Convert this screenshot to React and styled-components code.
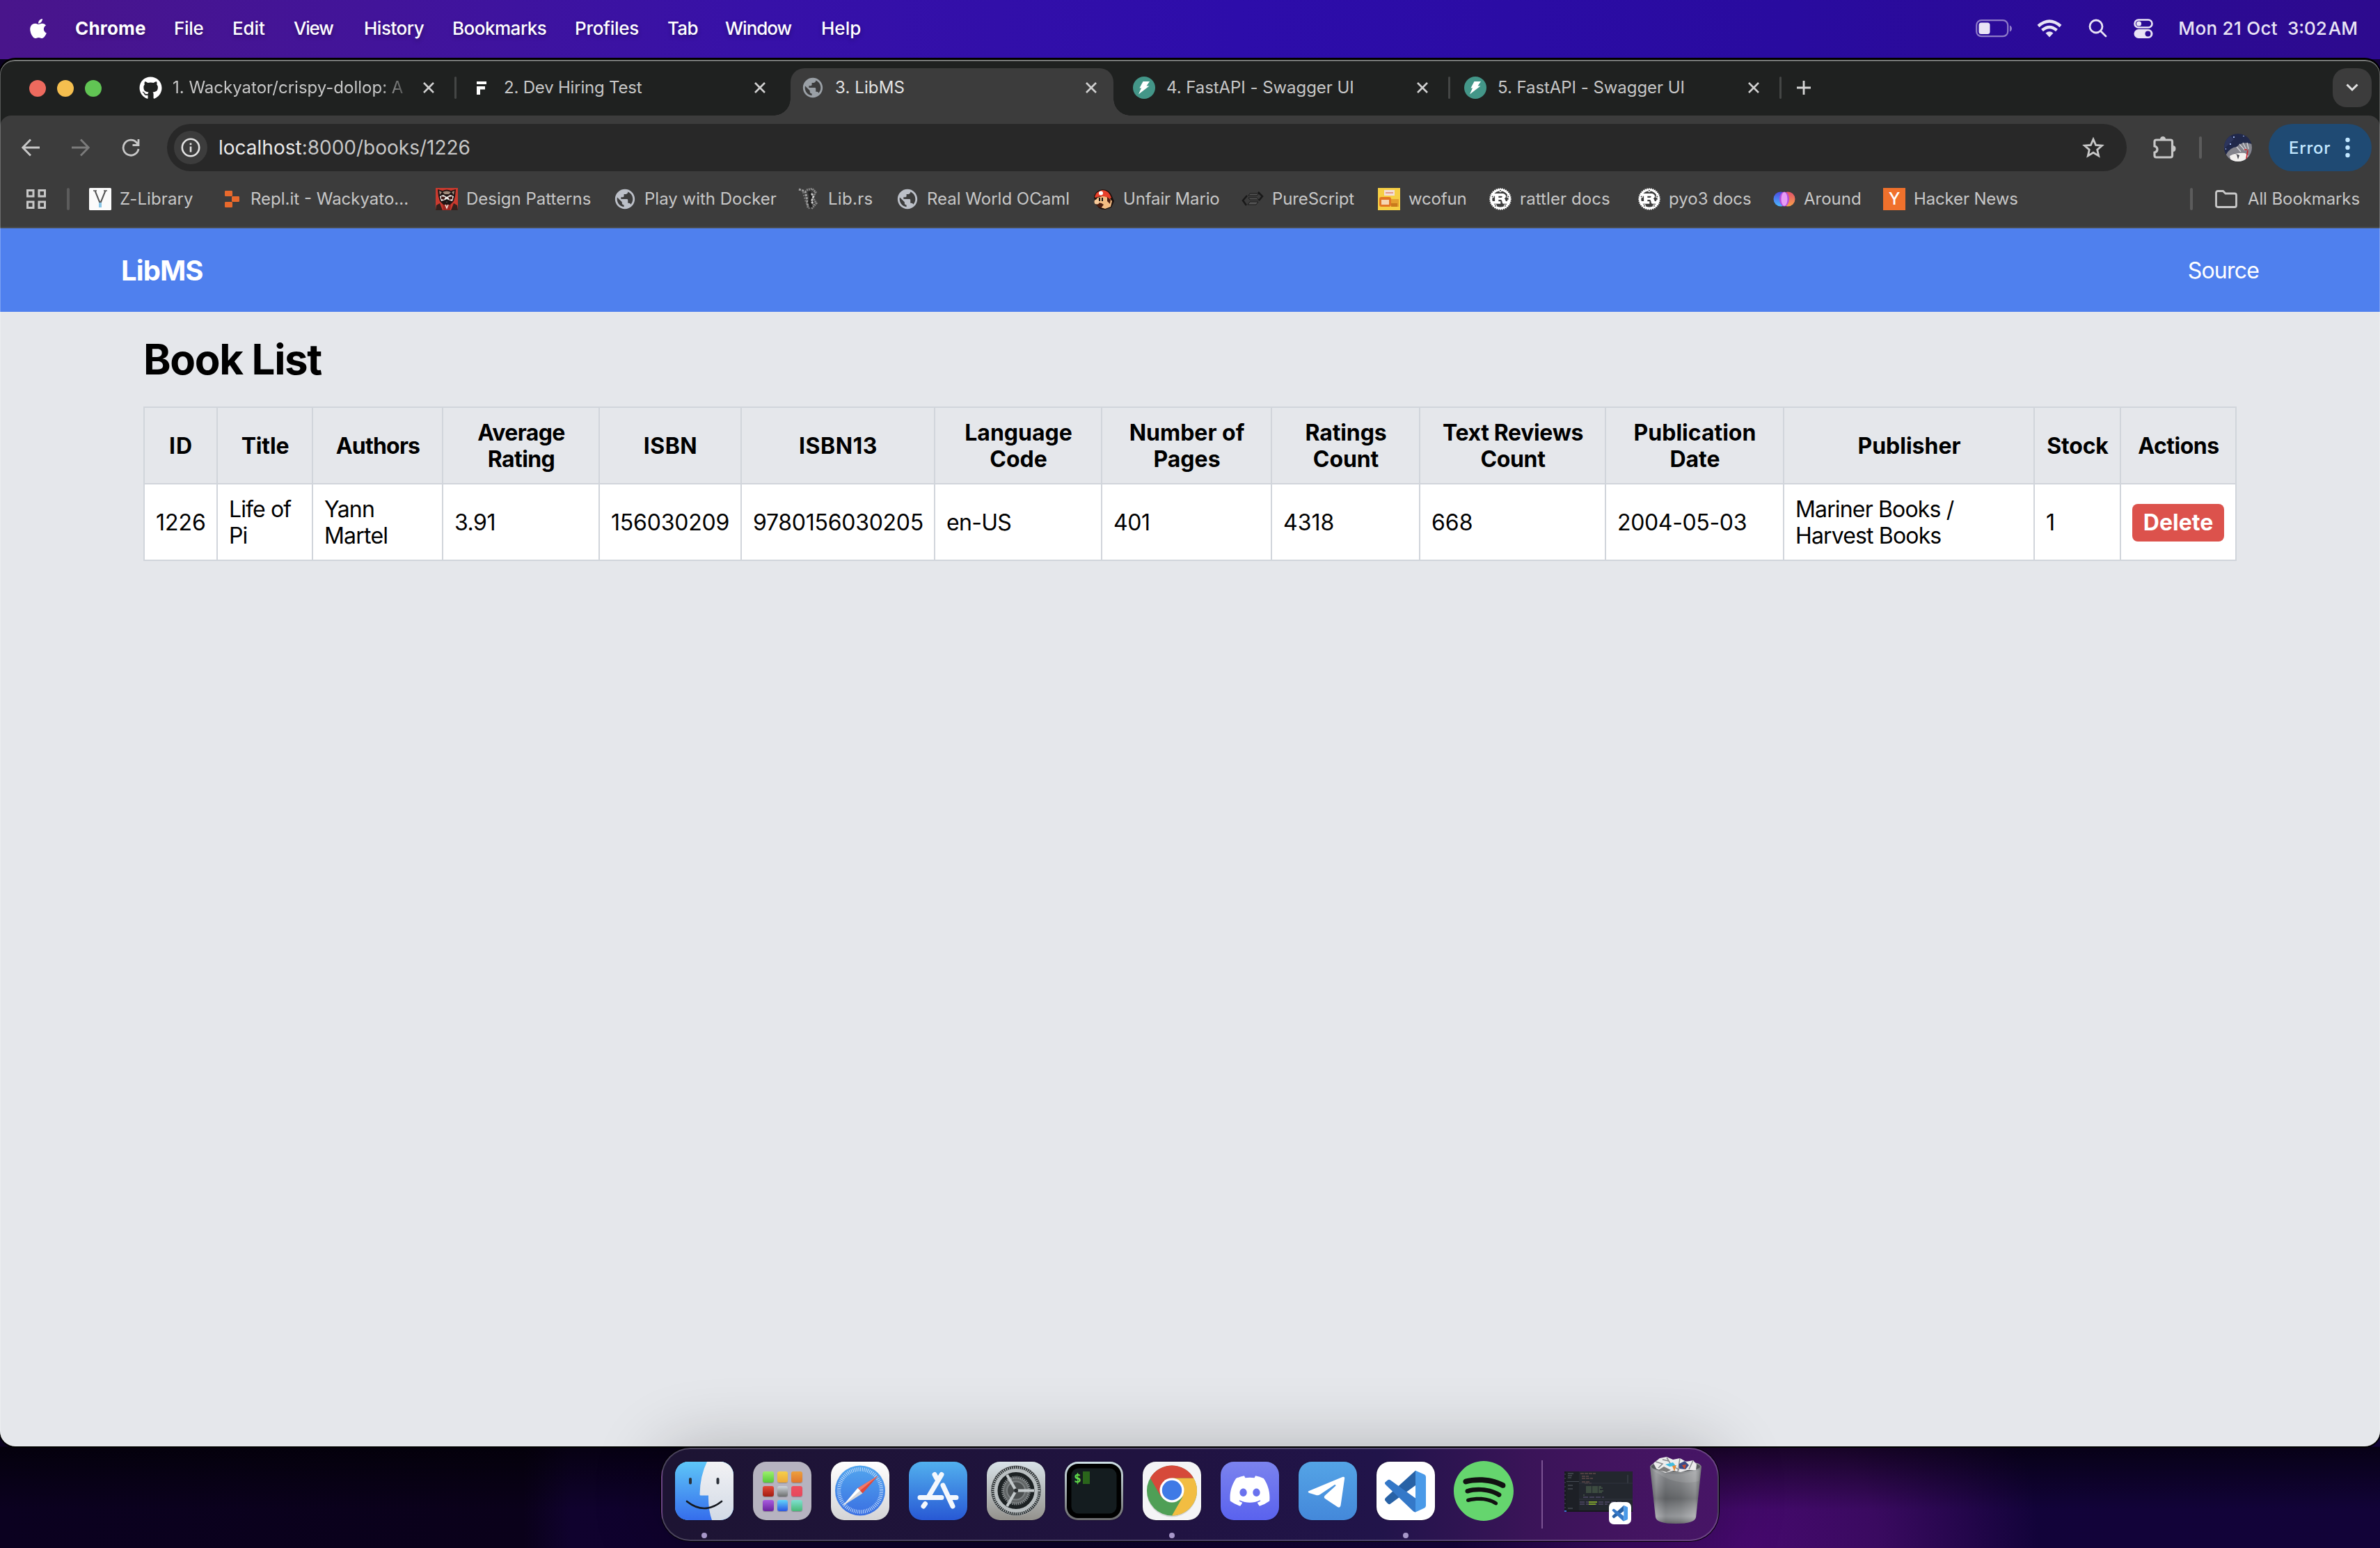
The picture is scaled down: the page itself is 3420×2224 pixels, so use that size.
import React from "react";
import styled, { createGlobalStyle, css } from "styled-components";
import { FaApple, FaDiscord, FaGithub } from "react-icons/fa";
import { MdPublic } from "react-icons/md";
import { SiRust, SiSpotify } from "react-icons/si";

const Global = createGlobalStyle`
  * { box-sizing: border-box; }
  body {
    margin: 0;
    font-family: Inter, "Noto Sans", sans-serif;
    overflow: hidden;
  }
  svg { display: block; flex: none; }
`;

/* ---------- Desktop ---------- */

const Desktop = styled.div`
  position: relative;
  width: 3420px;
  height: 2224px;
  display: flex;
  flex-direction: column;
  overflow: hidden;
  background:
    linear-gradient(180deg, transparent 2078px, rgba(0, 0, 0, 0.6) 2079px, transparent 2170px),
    radial-gradient(ellipse 420px 420px at 2510px 2224px, #46096e 0%, #3a0a60 45%, transparent 100%),
    linear-gradient(90deg, #0b0120 0%, #0a011a 22%, #10022e 24%, #0c0228 45%, #15043a 60%, #12033a 80%, #120338 100%);
`;

const MenuBar = styled.header`
  height: 85px;
  flex: none;
  display: flex;
  align-items: center;
  justify-content: space-between;
  padding: 0 32px 4px 39px;
  color: #fff;
  background: linear-gradient(90deg, #49158b 0%, #42149a 16%, #3711a8 32%, #2d0daa 52%, #290b9f 75%, #2d0a8e 100%);
`;

const Menus = styled.nav`
  display: flex;
  align-items: center;
  text-shadow: 0 3px 6px rgba(0, 0, 0, 0.3);
`;

const AppleSlot = styled.span`
  width: 69px;
  display: flex;
`;

const MenuItem = styled.span`
  width: ${(p) => p.$w}px;
  font-size: 26px;
  line-height: 36px;
  white-space: nowrap;
  font-weight: ${(p) => (p.$strong ? 700 : 500)};
  letter-spacing: ${(p) => p.$track || 0}px;
`;

const StatusArea = styled.div`
  display: flex;
  align-items: center;
  color: #e9e4f5;
`;

const StatusIcon = styled.span`
  width: ${(p) => p.$w}px;
  display: flex;
`;

const Clock = styled.span`
  font-size: 26px;
  font-weight: 500;
  letter-spacing: ${(p) => p.$track}px;
  word-spacing: ${(p) => p.$word || 0}px;
  margin-right: ${(p) => p.$gap || 0}px;
  white-space: nowrap;
`;

/* ---------- Browser window ---------- */

const BrowserWindow = styled.main`
  position: relative;
  height: 1993px;
  flex: none;
  display: flex;
  flex-direction: column;
  border-radius: 22px;
  overflow: hidden;
  border-top: 1px solid #000;
  background: #3c3c3c;
  box-shadow: 0 0 0 2px #000;
  &::after {
    content: "";
    position: absolute;
    inset: 0;
    border-radius: 21px;
    pointer-events: none;
    box-shadow: inset 0 0 0 1px rgba(255, 255, 255, 0.25), inset 0 2px 0 rgba(255, 255, 255, 0.3);
  }
`;

const TabStrip = styled.div`
  height: 80px;
  flex: none;
  display: flex;
  align-items: flex-start;
  padding: 12px 12px 0 42px;
  background: #1f2120;
`;

const Lights = styled.div`
  height: 56px;
  width: 142px;
  display: flex;
  align-items: center;
  gap: 16px;
  padding-top: 2px;
`;

const Light = styled.span`
  width: 24px;
  height: 24px;
  border-radius: 50%;
  background: ${(p) => p.$color};
`;

const TabBox = styled.div`
  position: relative;
  width: 464px;
  height: 68px;
  flex: none;
  display: flex;
  align-items: center;
  padding: 0 16px 12px;
  gap: 16px;
  color: ${(p) => (p.$active ? "#e3e3e3" : "#c7c7c7")};
  ${(p) =>
    p.$active &&
    css`
      background: #3c3c3c;
      border-radius: 20px 20px 0 0;
      &::before,
      &::after {
        content: "";
        position: absolute;
        bottom: 0;
        width: 24px;
        height: 24px;
      }
      &::before {
        left: -24px;
        background: radial-gradient(circle at 0 0, transparent 23.5px, #3c3c3c 24px);
      }
      &::after {
        right: -24px;
        background: radial-gradient(circle at 100% 0, transparent 23.5px, #3c3c3c 24px);
      }
    `}
`;

const TabTitle = styled.span`
  flex: 1;
  font-size: 24px;
  line-height: 34px;
  white-space: nowrap;
  overflow: hidden;
  letter-spacing: ${(p) => p.$track || 0}px;
  ${(p) =>
    p.$fade &&
    css`
      mask-image: linear-gradient(90deg, #000 88%, transparent 104%);
    `}
`;

const IconBox = styled.span`
  width: ${(p) => p.$w || 32}px;
  height: ${(p) => p.$h || p.$w || 32}px;
  flex: none;
  display: flex;
  align-items: center;
  justify-content: center;
`;

const TabGap = styled.span`
  width: 12px;
  height: 56px;
  flex: none;
  display: flex;
  align-items: center;
  justify-content: center;
`;

const Divider = styled.span`
  width: ${(p) => p.$w || 4}px;
  height: 32px;
  flex: none;
  border-radius: 2px;
  background: ${(p) => p.$color || "#5c5c5c"};
`;

const NewTab = styled.button`
  width: 56px;
  height: 56px;
  padding: 0;
  border: 0;
  background: none;
  display: flex;
  align-items: center;
  justify-content: center;
`;

const TabSearch = styled.button`
  width: 56px;
  height: 56px;
  margin-left: auto;
  padding: 0;
  border: 0;
  border-radius: 20px;
  background: #3c3c3c;
  display: flex;
  align-items: center;
  justify-content: center;
`;

const ToolbarWrap = styled.div`
  background: #1f2120;
  flex: none;
`;

const Toolbar = styled.div`
  height: 92px;
  display: flex;
  align-items: center;
  padding: 0 12px 0 8px;
  background: #3c3c3c;
  border-radius: 16px 16px 0 0;
`;

const NavButton = styled.span`
  width: 72px;
  height: 68px;
  flex: none;
  display: flex;
  align-items: center;
  justify-content: center;
`;

const Omnibox = styled.div`
  width: 2816px;
  height: 68px;
  flex: none;
  margin-left: 16px;
  border-radius: 34px;
  background: #282828;
  display: flex;
  align-items: center;
  padding: 0 32px 0 10px;
`;

const SiteInfo = styled.span`
  width: 48px;
  height: 48px;
  border-radius: 50%;
  background: #3c3c3c;
  display: flex;
  align-items: center;
  justify-content: center;
`;

const Url = styled.span`
  flex: 1;
  margin-left: 16px;
  font-size: 28px;
  color: #c7c7c7;
  b {
    font-weight: 400;
    color: #e9e9e9;
  }
`;

const ToolbarEnd = styled.div`
  flex: 1;
  display: flex;
  align-items: center;
  padding-left: 38px;
`;

const Avatar = styled.span`
  width: 40px;
  height: 40px;
  flex: none;
  border-radius: 50%;
  overflow: hidden;
`;

const ErrorPill = styled.button`
  width: 148px;
  height: 68px;
  flex: none;
  margin-left: auto;
  border: 0;
  border-radius: 34px;
  background: #1f4a73;
  color: #c2e7ff;
  font: 500 24px Inter, sans-serif;
  letter-spacing: 0.7px;
  display: flex;
  align-items: center;
  justify-content: space-between;
  padding: 0 31px 0 29px;
`;

const Bookmarks = styled.div`
  height: 70px;
  flex: none;
  display: flex;
  align-items: center;
  padding: 0 29px 12px 38px;
  border-bottom: 2px solid #4a4d50;
  background: #3c3c3c;
  font-size: 24px;
  color: #c7c7c7;
`;

const AppsSlot = styled.span`
  width: 58px;
  display: flex;
`;

const Bookmark = styled.span`
  width: ${(p) => (p.$w ? p.$w + "px" : "auto")};
  flex: none;
  display: flex;
  align-items: center;
  gap: 12px;
  line-height: 34px;
  letter-spacing: ${(p) => p.$track || 0}px;
  white-space: nowrap;
`;

const BookmarkList = styled.div`
  flex: 1;
  display: flex;
  padding-left: 28px;
`;

/* ---------- Page ---------- */

const Page = styled.div`
  flex: 1;
  background: #e5e7eb;
  color: #000;
`;

const SiteNav = styled.nav`
  height: 120px;
  padding: 0 174px;
  display: flex;
  align-items: center;
  justify-content: space-between;
  background: #4f80ee;
  color: #fff;
`;

const Brand = styled.a`
  font-size: 40px;
  font-weight: 700;
  letter-spacing: -0.9px;
`;

const SourceLink = styled.a`
  font-size: 32px;
  letter-spacing: -0.8px;
`;

const Container = styled.section`
  padding: 32px 206px;
`;

const Heading = styled.h1`
  margin: 0 0 32px;
  font-size: 60px;
  line-height: 72px;
  font-weight: 700;
  letter-spacing: -1.35px;
`;

const Table = styled.table`
  width: 3008px;
  table-layout: fixed;
  border-collapse: collapse;
  font-size: 32px;
  line-height: 38px;
`;

const cell = css`
  border: 2px solid #d1d5db;
  height: 110px;
  letter-spacing: ${(p) => p.$track || 0}px;
`;

const Th = styled.th`
  ${cell}
  padding: 2px 14px 0 15px;
  font-weight: 700;
  text-align: center;
  white-space: pre;
`;

const Td = styled.td`
  ${cell}
  padding: 2px 13px 0 16px;
  background: #fff;
  text-align: left;
  white-space: pre;
`;

const DeleteButton = styled.button`
  display: block;
  width: 132px;
  height: 54px;
  margin-bottom: 1px;
  padding: 0;
  border: 0;
  border-radius: 8px;
  background: #dc524c;
  color: #fff;
  font: 700 32px/54px Inter, sans-serif;
`;

/* ---------- Dock ---------- */

const Dock = styled.footer`
  position: absolute;
  left: 950px;
  top: 2080px;
  width: 1520px;
  height: 134px;
  padding: 0 18px;
  display: flex;
  align-items: flex-start;
  border: 2px solid rgba(255, 255, 255, 0.2);
  border-radius: 42px;
  background: linear-gradient(90deg, #1d1433 0%, #201340 45%, #21144a 68%, #3a1458 82%, #42145f 90%, #471566 100%);
  box-shadow: 0 0 0 1px #000, 0 0 100px rgba(0, 0, 0, 0.24);
`;

const DockItem = styled.span`
  width: ${(p) => p.$w || 112}px;
  padding-top: ${(p) => (p.$top === undefined ? 18 : p.$top)}px;
  flex: none;
`;

const RunningDot = styled.span`
  display: block;
  width: 8px;
  height: 8px;
  margin: 18px 0 0 38px;
  border-radius: 50%;
  background: #a797c9;
`;

const DockDivider = styled.span`
  width: 2px;
  height: 98px;
  margin: 16px 31px 0 0;
  background: #7b5393;
`;

const AppTile = styled.span`
  width: 84px;
  height: 84px;
  border-radius: 19px;
  overflow: hidden;
  display: flex;
  align-items: center;
  justify-content: center;
  background: ${(p) => p.$bg};
  box-shadow: 0 0 2px rgba(0, 0, 0, 0.6);
`;

const SpotifyDisc = styled.span`
  width: 86px;
  height: 86px;
  margin: -1px 0 0 -1px;
  border-radius: 50%;
  display: flex;
  align-items: center;
  justify-content: center;
  background: radial-gradient(circle, #111 0 40px, transparent 41px);
  color: #65d56e;
`;

/* ---------- Small icons ---------- */

const Close = () => (
  <IconBox>
    <svg width="16" height="16" viewBox="0 0 16 16" stroke="#d0d0d0" strokeWidth="2.6">
      <path d="M1 1 15 15M15 1 1 15" />
    </svg>
  </IconBox>
);

const Globe = ({ color }) => (
  <IconBox>
    <MdPublic size={34} color={color} />
  </IconBox>
);

const Github = () => (
  <IconBox>
    <FaGithub size={33} color="#fff" />
  </IconBox>
);

const FIcon = () => (
  <IconBox>
    <svg width="32" height="32" viewBox="0 0 32 32" fill="#fff">
      <path d="M9 7h14v4H9zM9 14h12v4.5h-7V26H9z" />
    </svg>
  </IconBox>
);

const FastApi = () => (
  <IconBox>
    <svg width="32" height="32" viewBox="0 0 32 32">
      <circle cx="16" cy="16" r="16" fill="#439688" />
      <path d="M14.500 7H24L19.500 13.500H23.500L8 25.500 12 16.500H9.500Z" fill="#fff" />
    </svg>
  </IconBox>
);

const Rust = () => (
  <IconBox>
    <SiRust size={32} color="#fff" />
  </IconBox>
);

const ZLib = () => (
  <svg width="32" height="32" viewBox="0 0 32 32">
    <rect width="32" height="32" rx="1.5" fill="#fbfbfb" />
    <path d="M8.5 4 15 20V26M23.500 4 17 20V26" stroke="#555" strokeWidth="2" fill="none" />
    <path d="M6 4h5M21 4h5" stroke="#555" strokeWidth="1.5" />
    <rect x="14" y="21" width="4" height="7" fill="#8ac6e6" />
  </svg>
);

const Replit = () => (
  <svg width="32" height="32" viewBox="0 0 32 32" fill="#e8692c">
    <rect x="7" y="4" width="11" height="8" rx="1.2" />
    <rect x="17" y="12" width="11" height="8" rx="1.2" />
    <rect x="7" y="20" width="11" height="8" rx="1.2" />
  </svg>
);

const Raccoon = () => (
  <svg width="32" height="32" viewBox="0 0 32 32">
    <rect width="32" height="32" fill="#c93a2e" />
    <path d="M3 2 10 4Q16 1 22 4L29 2 28 12 26 19 21 24H11L6 19 4 12Z" fill="#201414" />
    <path d="M5 4 9 6 6 10ZM27 4 23 6 26 10ZM10 6Q16 3 22 6L19 9H13Z" fill="#a08a7a" />
    <path d="M6 12 11 10 16 13 21 10 26 12 24 19 18 17 16 21 14 17 8 19Z" fill="#f3eeea" />
    <path d="M8 12 14 13 12 17 8 16ZM24 12 18 13 20 17 24 16Z" fill="#3a1512" />
    <circle cx="16" cy="18" r="2" fill="#111" />
    <path d="M1 25 6 22 10 32H0ZM31 25 26 22 22 32H32Z" fill="#33211d" />
    <path d="M10 24h12l-1 8H11Z" fill="#9c2621" />
    <path d="M14 24 16 29 18 24" stroke="#f4e5dc" fill="none" strokeWidth="1.500" />
  </svg>
);

const LibRs = () => (
  <svg width="32" height="32" viewBox="0 0 32 32" fill="none">
    <path d="M2 2 11 5 13 13 15 28" stroke="#a0a0a0" strokeWidth="3" strokeDasharray="3 1.500" />
    <path d="M13 3 21 1 26 6 22 14 27 22 20 30" stroke="#888" strokeWidth="3" strokeDasharray="2 1" />
    <path d="M17 5 19 13 17 21 20 28" stroke="#222" strokeWidth="4" />
    <path d="M20 8 23 12 20 19 23 24" stroke="#d2d2d2" strokeWidth="2.500" strokeDasharray="3 1.500" />
    <path d="M8 6 12 20 17 30" stroke="#777" strokeWidth="2.500" strokeDasharray="2 2" />
  </svg>
);

const Mario = () => (
  <svg width="32" height="32" viewBox="0 0 32 32">
    <path d="M2 14Q3 4 14 2 24 2 28 12L31 19 27 28 18 31Q9 31 7 26L2 21 3 17Z" fill="#1c0f0b" />
    <path d="M7 14 17 11 24 14 28 19 26 27 18 30 12 28 3 21 5 17Z" fill="#f4bd83" />
    <path d="M3 13Q5 5 14 3 23 3 27 14L24 16Q17 9 4 14Z" fill="#e8402a" />
    <circle cx="12" cy="7.500" r="3" fill="#fff" />
    <path d="M21 13 26 17 25 23 21 19ZM5 22Q12 20 16 24L12 29Q6 27 5 22Z" fill="#4a1d10" />
    <path d="M10 14v5M14 14v5" stroke="#111" strokeWidth="2" />
    <circle cx="6" cy="20" r="3.600" fill="#f8cb9a" />
  </svg>
);

const PureScript = () => (
  <svg width="32" height="32" viewBox="0 0 32 32" fill="none" stroke="#191919">
    <path d="M8 11 2 18 7 25M24 6 30 12 25 18" strokeWidth="2.500" />
    <path d="M12 8H25L22 11H10ZM10 14H22L25 17H12ZM12 20H24L21 24H9Z" fill="#555" strokeWidth="1" />
  </svg>
);

const Wcofun = () => (
  <svg width="32" height="32" viewBox="0 0 32 32">
    <rect width="32" height="32" fill="#f6cf45" />
    <rect x="9" y="3" width="15" height="8" fill="#f3dfd8" />
    <path d="M11 6h11v2H11z" fill="#e29a86" />
    <rect x="2" y="13" width="17" height="14" rx="3" fill="#e27525" />
    <rect x="5" y="17" width="11" height="7" fill="#f6d6b3" />
    <path d="M19 16H30V27H19Z" fill="#e5a02f" />
    <path d="M19 22H28V27H19Z" fill="#c97a1c" />
  </svg>
);

const Around = () => (
  <svg width="32" height="32" viewBox="0 0 32 32">
    <defs>
      <linearGradient id="arL" x1="0" y1="0" x2="0" y2="1">
        <stop offset="0" stopColor="#4a4ae0" />
        <stop offset="1" stopColor="#4cb8ff" />
      </linearGradient>
      <linearGradient id="arR" x1="0" y1="0" x2="0" y2="1">
        <stop offset="0" stopColor="#e0506a" />
        <stop offset="1" stopColor="#f8a04a" />
      </linearGradient>
    </defs>
    <circle cx="11" cy="16" r="10.500" fill="url(#arL)" />
    <circle cx="21" cy="16" r="10.500" fill="url(#arR)" />
    <ellipse cx="16" cy="16" rx="7" ry="10.500" fill="#b44be0" />
    <ellipse cx="16" cy="16" rx="4.500" ry="10" fill="#e79cf5" />
  </svg>
);

const YMark = styled.span`
  width: 32px;
  height: 32px;
  flex: none;
  background: #f0712c;
  color: #fff;
  font: 500 24px/32px Inter, sans-serif;
  text-align: center;
`;

const Folder = () => (
  <svg width="32" height="26" viewBox="0 0 32 26" fill="none" stroke="#c7c7c7" strokeWidth="2.8">
    <path d="M1.500 22V4Q1.500 1.500 4 1.500H11.500L15 5H28Q30.500 5 30.500 7.500V22Q30.500 24.500 28 24.500H4Q1.500 24.500 1.500 22Z" />
  </svg>
);

const AvatarArt = () => (
  <svg width="40" height="40" viewBox="0 0 40 40">
    <rect width="40" height="40" fill="#20284a" />
    <path d="M0 22 14 8 6 0H0Z" fill="#2c355c" />
    <path d="M14 4v2M9 14v2M28 3v1M2 22h1" stroke="#9db4f0" strokeWidth="2" />
    <path d="M3 30Q8 20 18 19 26 10 40 15V40H0Z" fill="#84848c" />
    <path d="M8 32Q18 27 30 28L35 32 28 40H10Z" fill="#f2f0ee" />
    <path d="M22 15 30 24M27 13 32 23M33 13 35 22M18 19 24 26" stroke="#d4d4da" strokeWidth="1.300" />
    <path d="M12 27 22 31 20 37 18 30Z" fill="#4a4a52" />
    <path d="M29 23h4M34 24 32 36" stroke="#c8202a" strokeWidth="1.600" />
  </svg>
);

/* ---------- Dock artwork ---------- */

const FinderArt = () => (
  <svg width="84" height="84" viewBox="0 0 84 84">
    <defs>
      <linearGradient id="fb" x1="0" y1="0" x2="0" y2="1">
        <stop offset="0" stopColor="#5ec6f8" />
        <stop offset="1" stopColor="#356dec" />
      </linearGradient>
      <linearGradient id="fw" x1="0" y1="0" x2="0" y2="1">
        <stop offset="0" stopColor="#f2f2f4" />
        <stop offset="1" stopColor="#d2dae6" />
      </linearGradient>
    </defs>
    <rect width="84" height="84" fill="url(#fb)" />
    <path d="M46 0Q36 20 35.500 47Q35.500 48.500 37 48.500H48Q47.500 68 53 84H84V0Z" fill="url(#fw)" />
    <path d="M22 25V30.500M61.500 25V30.500" stroke="#2a3038" strokeWidth="4" strokeLinecap="round" />
    <path d="M17 57Q42 77 67 57" stroke="#15191f" strokeWidth="2.600" fill="none" strokeLinecap="round" />
  </svg>
);

const padColors = [
  ["#9cf06c", "#57c93a"], ["#f5cf4a", "#eda93a"], ["#eda03c", "#e0762f"],
  ["#e4493a", "#a31c12"], ["#cfd6dc", "#6e6f70"], ["#ee4f60", "#e5485c"],
  ["#a95be0", "#6a249e"], ["#62d4fa", "#2a55e4"], ["#7fe0d0", "#49b878"],
];

const Pad = styled.span`
  width: 84px;
  height: 84px;
  padding: 14px;
  display: grid;
  grid-template-columns: repeat(3, 15.5px);
  grid-auto-rows: 15.5px;
  gap: 5px;
`;

const PadCell = styled.span`
  border-radius: 3px;
  background: linear-gradient(${(p) => p.$from}, ${(p) => p.$to});
  box-shadow: 0 1px 1px rgba(0, 0, 0, 0.25);
`;

const SafariArt = () => (
  <svg width="84" height="84" viewBox="0 0 84 84">
    <defs>
      <linearGradient id="sf" x1="0" y1="0" x2="0" y2="1">
        <stop offset="0" stopColor="#52a6ee" />
        <stop offset="1" stopColor="#3a6fe2" />
      </linearGradient>
    </defs>
    <circle cx="42" cy="41.500" r="36" fill="url(#sf)" />
    <circle cx="42" cy="41.500" r="30.500" fill="none" stroke="#cfe4fb" strokeWidth="5.500" strokeDasharray="0.900 1.762" />
    <path d="M68 20 45.500 45.500 38.500 38Z" fill="#e1483a" />
    <path d="M68 20 42 41.500 38.500 38Z" fill="#f07a6a" />
    <path d="M17 63.500 38.500 38 45.500 45.500Z" fill="#d6d6d8" />
    <path d="M17 63.500 38.500 38 42 41.500Z" fill="#fff" />
  </svg>
);

const AppStoreArt = () => (
  <svg width="84" height="84" viewBox="0 0 84 84" fill="none" stroke="#f4f8fd" strokeWidth="7" strokeLinecap="round">
    <path d="M37 18.500 40 24M49 34 63 64" />
    <path d="M47 18.500 29 49" />
    <path d="M16 51.500H47M58 51.500H68M23.500 60.500 21 64" />
  </svg>
);

const SettingsArt = () => (
  <svg width="84" height="84" viewBox="0 0 84 84" fill="none">
    <circle cx="42" cy="41.500" r="36" fill="#1d2224" />
    <circle cx="42" cy="41.500" r="33" stroke="#aab0b2" strokeWidth="4" strokeDasharray="1.500 1.400" />
    <circle cx="42" cy="41.500" r="29" stroke="#b9bfc1" strokeWidth="5" />
    <circle cx="42" cy="41.500" r="19" fill="#636768" stroke="#8c9193" strokeWidth="4" strokeDasharray="1.400 1.400" />
    <circle cx="42" cy="41.500" r="13" fill="#4b4f50" stroke="#7b8082" strokeWidth="2" />
    <path d="M42 41.500H68M42 41.500 29 19M42 41.500 29 64" stroke="#c3c9cb" strokeWidth="4" />
    <circle cx="42" cy="41.500" r="3" fill="#2a2e30" />
    <circle cx="42" cy="41.500" r="36" stroke="#c8ccce" strokeOpacity=".6" />
  </svg>
);

const TerminalArt = () => (
  <svg width="84" height="84" viewBox="0 0 84 84">
    <rect x="3" y="3" width="78" height="78" rx="16" fill="#000" />
    <rect x="9.500" y="9.500" width="65" height="65" rx="10" fill="#141c1f" />
    <rect x="26" y="14" width="10" height="18" fill="#2a651b" />
    <text x="13" y="29.500" fontFamily="DejaVu Sans Mono, monospace" fontSize="18" fontWeight="700" fill="#62d94a">$</text>
  </svg>
);

const ChromeArt = () => (
  <svg width="84" height="84" viewBox="0 0 84 84">
    <circle cx="42" cy="43.500" r="36" fill="#000" opacity=".12" />
    <circle cx="42" cy="41.500" r="36" fill="#4f9f56" />
    <path d="M42 23.500H73.200A36 36 0 0 1 42 77.500L57.500 50.500Z" fill="#f2bd42" />
    <path d="M10.800 23.500A36 36 0 0 1 73.200 23.500H42V42L26.500 50.500Z" fill="#d6493a" />
    <circle cx="42" cy="41" r="17.500" fill="#fff" />
    <circle cx="42" cy="41" r="14.200" fill="#3f7ae6" />
  </svg>
);

const TelegramArt = () => (
  <svg width="84" height="84" viewBox="0 0 84 84">
    <path
      d="M15 42 63 22Q67 21 66 25L60.500 63Q59.500 67 56 65L38 53Q35.500 51 38 48.500L53.500 34.500Q53 32 50.500 34L31 47Q28.500 48.800 26 48.200L15.500 45Q12 43.500 15 42Z"
      fill="#fff"
    />
  </svg>
);

const CodeShapes = () => (
  <>
    <path d="M13.500 51.500 56 12.700V34L20 60.500Q18 62 16 60L12.500 56Q11 54 13.500 51.500Z" fill="#2862a6" />
    <path d="M13.500 33.500Q11 31 12.500 29.500L16 26.500Q18 25 20 26.500L56 52.500V72.500Q54 72.500 52 70.500Z" fill="#3478c8" />
    <path d="M56 12.700 69 18.500Q71 19.500 71 22V63Q71 65.500 69 66.500L56 72.500Z" fill="#4a9ae8" />
  </>
);

const CodeArt = () => (
  <svg width="84" height="84" viewBox="0 0 84 84">
    <CodeShapes />
  </svg>
);

const ThumbArt = () => (
  <svg width="98" height="76" viewBox="0 0 98 76">
    <rect width="98" height="58" fill="#23272e" />
    <rect width="3" height="58" fill="#181b20" />
    <rect x="3" width="18" height="58" fill="#1d2026" />
    <rect y="56" width="98" height="2" fill="#16181c" />
    <g strokeWidth="1" fill="none">
      <path d="M5 3h8M5 6h6M5 9h5M5 20h7M5 25h7M5 53h7" stroke="#5a6068" />
      <path d="M3 14.500h18" stroke="#444a54" />
      <path d="M1 3v52" stroke="#4b5158" strokeDasharray="2 4" />
      <path d="M23 3h22M25 7h10M25 10h16M25 15h12M29 17h10" stroke="#7c5a56" strokeDasharray="5 1" />
      <path d="M31 22h22M31 24h24M31 26h20M31 28h25M31 30h23M27 34h2" stroke="#567052" strokeDasharray="8 1" />
      <path d="M27 37h30M22 44h60M22 47h40" stroke="#665b82" strokeDasharray="7 2" />
      <path d="M35 44h12M35 47h10" stroke="#7fa030" strokeWidth="2" />
      <path d="M21 40h77" stroke="#343941" />
      <path d="M91 5v12" stroke="#444b52" />
      <path d="M21 17h77" stroke="#30353e" />
    </g>
    <rect y="56" width="3" height="2" fill="#3a78d0" />
    <rect x="64" y="44" width="32" height="32" rx="7" fill="#fff" />
    <svg x="64" y="44" width="32" height="32" viewBox="0 0 84 84">
      <CodeShapes />
    </svg>
  </svg>
);

const TrashArt = () => (
  <svg width="74" height="98" viewBox="0 0 74 98">
    <defs>
      <linearGradient id="tr" x1="0" y1="0" x2="1" y2="0">
        <stop offset="0" stopColor="#62656a" />
        <stop offset=".12" stopColor="#97999d" />
        <stop offset=".3" stopColor="#717478" />
        <stop offset=".6" stopColor="#7d8083" />
        <stop offset=".88" stopColor="#9fa1a4" />
        <stop offset="1" stopColor="#5c5f63" />
      </linearGradient>
      <linearGradient id="tb" x1="0" y1="0" x2="0" y2="1">
        <stop offset="0" stopColor="#fff" stopOpacity=".15" />
        <stop offset=".6" stopColor="#222" stopOpacity=".25" />
        <stop offset=".88" stopColor="#fff" stopOpacity=".2" />
        <stop offset="1" stopColor="#333" stopOpacity=".3" />
      </linearGradient>
    </defs>
    <path d="M0 15Q2 7 37 7T74 15L66 88Q64 97 37 97T8 88Z" fill="url(#tr)" />
    <path d="M0 15Q2 7 37 7T74 15L66 88Q64 97 37 97T8 88Z" fill="url(#tb)" />
    <ellipse cx="37" cy="15" rx="35" ry="7.500" fill="#55585c" />
    <path d="M5 10 14 3 24 1 33 5 43 3 52 8 62 6 67 12 66 20 54 20 44 23 34 21 22 24 9 18Z" fill="#ececec" />
    <path d="M8 8 18 11 12 17M24 2 30 12 42 20M43 3 40 22M62 6 56 19M18 5 27 7" stroke="#85888b" strokeWidth="1.500" fill="none" />
    <path d="M22 12 33 9 37 14 28 15Z" fill="#41bde0" />
    <path d="M32 14 38 13 35 22Z" fill="#e58c3a" />
    <path d="M42 11 50 7 56 13 51 19 42 18Z" fill="#3b4a86" />
    <path d="M46 13 52 12 50 19Z" fill="#c94d2f" />
    <path d="M12 20 24 23 30 20 20 15Z" fill="#333" opacity=".6" />
    <path d="M2 19Q37 33 72 19L70 36Q45 42 20 30Z" fill="#fff" opacity=".1" />
  </svg>
);

/* ---------- Data ---------- */

const menus = [
  ["Chrome", 142, 0.2, true],
  ["File", 84, -0.3],
  ["Edit", 88, -0.1],
  ["View", 101, -1.2],
  ["History", 127, -0.5],
  ["Bookmarks", 176, -0.5],
  ["Profiles", 133, -0.3],
  ["Tab", 83, -0.7],
  ["Window", 138, -1],
  ["Help", 70, 0],
];

const tabs = [
  { title: "1. Wackyator/crispy-dollop: A", icon: <Github />, fade: true, divider: true },
  { title: "2. Dev Hiring Test", icon: <FIcon />, track: -0.2 },
  { title: "3. LibMS", icon: <Globe color="#9aa0a6" />, active: true, track: 0.1 },
  { title: "4. FastAPI - Swagger UI", icon: <FastApi />, divider: true, track: -0.05 },
  { title: "5. FastAPI - Swagger UI", icon: <FastApi />, divider: true, track: -0.05 },
];

const bookmarks = [
  ["Z-Library", 188, <ZLib />, 0.1],
  ["Repl.it - Wackyato...", 310, <Replit />],
  ["Design Patterns", 256, <Raccoon />],
  ["Play with Docker", 264, <Globe color="#bcc0c8" />],
  ["Lib.rs", 142, <LibRs />, 0.3],
  ["Real World OCaml", 282, <Globe color="#bcc0c8" />],
  ["Unfair Mario", 214, <Mario />, -0.15],
  ["PureScript", 196, <PureScript />, -0.1],
  ["wcofun", 160, <Wcofun />, -0.2],
  ["rattler docs", 214, <Rust />, 0.1],
  ["pyo3 docs", 194, <Rust />],
  ["Around", 158, <Around />],
  ["Hacker News", 220, <YMark>Y</YMark>, -0.15],
];

const columns = [
  ["ID", 105, 1, "1226", 0],
  ["Title", 137, -0.2, "Life of\nPi", -0.9],
  ["Authors", 187, -0.8, "Yann\nMartel", -0.8],
  ["Average\nRating", 225, -0.6, "3.91", -0.5],
  ["ISBN", 204, 0.5, "156030209", -0.2],
  ["ISBN13", 278, 0.5, "9780156030205", -0.27],
  ["Language\nCode", 240, 0, "en-US", -0.7],
  ["Number of\nPages", 244, 0, "401", -0.4],
  ["Ratings\nCount", 213, -0.1, "4318", 0],
  ["Text Reviews\nCount", 267, -0.35, "668", 0],
  ["Publication\nDate", 256, 0, "2004-05-03", -0.35],
  ["Publisher", 360, 0, "Mariner Books /\nHarvest Books", -0.85],
  ["Stock", 124, -0.2, "1", 0],
  ["Actions", 166, -0.5, null, 0],
];

const dockApps = [
  { name: "finder", bg: "#5ec6f8", art: <FinderArt />, running: true },
  {
    name: "launchpad",
    bg: "#b6b3c0",
    art: (
      <Pad>
        {padColors.map(([from, to]) => (
          <PadCell key={from} $from={from} $to={to} />
        ))}
      </Pad>
    ),
  },
  { name: "safari", bg: "linear-gradient(#fff, #d4d4d6)", art: <SafariArt /> },
  { name: "appstore", bg: "linear-gradient(#52b0ee, #2858d4)", art: <AppStoreArt /> },
  { name: "settings", bg: "linear-gradient(#d8e2e8, #93918c)", art: <SettingsArt /> },
  { name: "terminal", bg: "linear-gradient(#cfe0e6, #6c6c6e)", art: <TerminalArt /> },
  { name: "chrome", bg: "#f4f4f6", art: <ChromeArt />, running: true },
  { name: "discord", bg: "linear-gradient(#7b83ee, #5a62ee)", art: <FaDiscord size={62} color="#fff" /> },
  { name: "telegram", bg: "linear-gradient(#54a4e6, #4488da)", art: <TelegramArt /> },
  { name: "code", bg: "#fff", art: <CodeArt />, running: true },
];

export default function App() {
  return (
    <Desktop>
      <Global />
      <MenuBar>
        <Menus>
          <AppleSlot>
            <FaApple size={32} />
          </AppleSlot>
          {menus.map(([label, w, track, strong]) => (
            <MenuItem key={label} $w={w} $track={track} $strong={strong}>
              {label}
            </MenuItem>
          ))}
        </Menus>
        <StatusArea>
          <StatusIcon $w={88}>
            <svg width="52" height="26" viewBox="0 0 52 26">
              <rect x="1.200" y="1.200" width="45" height="23" rx="7" fill="none" stroke="#8f7cc8" strokeWidth="2.200" />
              <rect x="4.500" y="4.500" width="16" height="16.500" rx="3.500" fill="#e9e4f5" />
              <path d="M49 8.500Q52 10 52 13T49 17.500Z" fill="#8f7cc8" />
            </svg>
          </StatusIcon>
          <StatusIcon $w={74}>
            <svg width="36" height="26" viewBox="0 0 36 26" fill="none" stroke="#e9e4f5" strokeWidth="4.400">
              <path d="M2 9.500Q18 -4.500 34 9.500" />
              <path d="M7.500 15.500Q18 6.500 28.500 15.500" />
              <path d="M18 25.500 12.500 19.500Q18 15 23.500 19.500Z" fill="#e9e4f5" stroke="none" />
            </svg>
          </StatusIcon>
          <StatusIcon $w={65}>
            <svg width="27" height="27" viewBox="0 0 27 27" fill="none" stroke="#e9e4f5" strokeWidth="2.800" strokeLinecap="round">
              <circle cx="11" cy="11" r="9" />
              <path d="M17.500 17.500 25 25" />
            </svg>
          </StatusIcon>
          <StatusIcon $w={64}>
            <svg width="28" height="28" viewBox="0 0 28 28">
              <rect x="1.500" y="1.500" width="25" height="11" rx="5.500" fill="none" stroke="#e9e4f5" strokeWidth="2.600" />
              <circle cx="7.500" cy="7" r="3.600" fill="#e9e4f5" />
              <rect x="0.500" y="15" width="27" height="13" rx="6.500" fill="#e9e4f5" />
              <circle cx="20.500" cy="21.500" r="4" fill="#2c0a92" />
            </svg>
          </StatusIcon>
          <Clock $track={0.3} $gap={14}>Mon 21 Oct</Clock>
          <Clock $track={0} $word={-5}>3:02 AM</Clock>
        </StatusArea>
      </MenuBar>

      <BrowserWindow>
        <TabStrip>
          <Lights>
            <Light $color="#ed6a5e" />
            <Light $color="#f5bf4f" />
            <Light $color="#61c554" />
          </Lights>
          {tabs.map((tab) => (
            <React.Fragment key={tab.title}>
              <TabBox $active={tab.active}>
                {tab.icon}
                <TabTitle $track={tab.track} $fade={tab.fade}>
                  {tab.title}
                </TabTitle>
                <Close />
              </TabBox>
              <TabGap>{tab.divider && <Divider $w={3} $color="#444645" />}</TabGap>
            </React.Fragment>
          ))}
          <NewTab>
            <svg width="20" height="20" viewBox="0 0 20 20" stroke="#d6d6d6" strokeWidth="2.800">
              <path d="M10 0V20M0 10H20" />
            </svg>
          </NewTab>
          <TabSearch>
            <svg width="18" height="12" viewBox="0 0 18 12" fill="none" stroke="#e3e3e3" strokeWidth="3">
              <path d="M1.500 1.500 9 9 16.500 1.500" />
            </svg>
          </TabSearch>
        </TabStrip>

        <ToolbarWrap>
          <Toolbar>
            <NavButton>
              <svg width="26" height="26" viewBox="0 0 26 26" fill="none" stroke="#c7c7c7" strokeWidth="2.800">
                <path d="M13 1.500 1.800 13 13 24.500M2 13H26" />
              </svg>
            </NavButton>
            <NavButton>
              <svg width="26" height="26" viewBox="0 0 26 26" fill="none" stroke="#7b7b7b" strokeWidth="2.800">
                <path d="M13 1.500 24.200 13 13 24.500M24 13H0" />
              </svg>
            </NavButton>
            <NavButton>
              <svg width="26" height="26" viewBox="0 0 26 26" fill="none" stroke="#c7c7c7" strokeWidth="2.800">
                <path d="M24 15A11 11 0 1 1 21.500 6L23.500 9M24 1V9.500H15.500" />
              </svg>
            </NavButton>
            <Omnibox>
              <SiteInfo>
                <svg width="28" height="28" viewBox="0 0 28 28" fill="none" stroke="#e3e3e3" strokeWidth="2.600">
                  <circle cx="14" cy="14" r="12.200" />
                  <path d="M14 12.500V20.500M14 7.500V10.300" />
                </svg>
              </SiteInfo>
              <Url>
                <b>localhost</b>:8000/books/1226
              </Url>
              <svg width="32" height="32" viewBox="0 0 32 32" fill="none" stroke="#c7c7c7" strokeWidth="2.800">
                <path d="M16 4 19.600 12.400 28.500 13.200 21.700 19.100 23.700 27.900 16 23.200 8.300 27.900 10.300 19.100 3.500 13.200 12.400 12.400Z" />
              </svg>
            </Omnibox>
            <ToolbarEnd>
              <svg width="33" height="34" viewBox="0 0 33 34">
                <path
                  d="M2 8.500Q2 6 4.500 6H25Q27.500 6 27.500 8.500V28.500Q27.500 31 25 31H4.500Q2 31 2 28.500V24Q6 23 6 19.500T2 15Z"
                  fill="none"
                  stroke="#c7c7c7"
                  strokeWidth="3.200"
                />
                <path d="M10 5.500Q10 1 14 1T18 5.500ZM28 14Q32.500 14 32.500 18.500T28 23Z" fill="#c7c7c7" />
              </svg>
              <IconBox $w={69} $h={32}>
                <Divider />
              </IconBox>
              <Avatar>
                <AvatarArt />
              </Avatar>
              <ErrorPill>
                Error
                <svg width="7" height="30" viewBox="0 0 7 30" fill="#c2e7ff">
                  <circle cx="3.500" cy="4" r="3.200" />
                  <circle cx="3.500" cy="15" r="3.200" />
                  <circle cx="3.500" cy="26" r="3.200" />
                </svg>
              </ErrorPill>
            </ToolbarEnd>
          </Toolbar>
        </ToolbarWrap>

        <Bookmarks>
          <AppsSlot>
            <svg width="28" height="28" viewBox="0 0 28 28" fill="none" stroke="#c7c7c7" strokeWidth="3">
              <path d="M1.500 1.500h8.500v8.500H1.500zM18 1.500h8.500v8.500H18zM1.500 18h8.500v8.500H1.500zM18 18h8.500v8.500H18z" />
            </svg>
          </AppsSlot>
          <Divider />
          <BookmarkList>
            {bookmarks.map(([label, w, icon, track]) => (
              <Bookmark key={label} $w={w} $track={track}>
                {icon}
                {label}
              </Bookmark>
            ))}
          </BookmarkList>
          <IconBox $w={64} $h={32}>
            <Divider />
          </IconBox>
          <Bookmark $track={-0.1}>
            <IconBox $w={37}>
              <Folder />
            </IconBox>
            All Bookmarks
          </Bookmark>
        </Bookmarks>

        <Page>
          <SiteNav>
            <Brand>LibMS</Brand>
            <SourceLink>Source</SourceLink>
          </SiteNav>
          <Container>
            <Heading>Book List</Heading>
            <Table>
              <colgroup>
                {columns.map(([label, w]) => (
                  <col key={label} width={w} />
                ))}
              </colgroup>
              <thead>
                <tr>
                  {columns.map(([label, , track]) => (
                    <Th key={label} $track={track}>
                      {label}
                    </Th>
                  ))}
                </tr>
              </thead>
              <tbody>
                <tr>
                  {columns.map(([label, , , value, track]) => (
                    <Td key={label} $track={track}>
                      {value === null ? <DeleteButton>Delete</DeleteButton> : value}
                    </Td>
                  ))}
                </tr>
              </tbody>
            </Table>
          </Container>
        </Page>
      </BrowserWindow>

      <Dock>
        {dockApps.map((app) => (
          <DockItem key={app.name}>
            <AppTile $bg={app.bg}>{app.art}</AppTile>
            {app.running && <RunningDot />}
          </DockItem>
        ))}
        <DockItem $w={125}>
          <SpotifyDisc>
            <SiSpotify size={86} />
          </SpotifyDisc>
        </DockItem>
        <DockDivider />
        <DockItem $w={123} $top={32}>
          <ThumbArt />
        </DockItem>
        <DockItem $w={74} $top={10}>
          <TrashArt />
        </DockItem>
      </Dock>
    </Desktop>
  );
}
